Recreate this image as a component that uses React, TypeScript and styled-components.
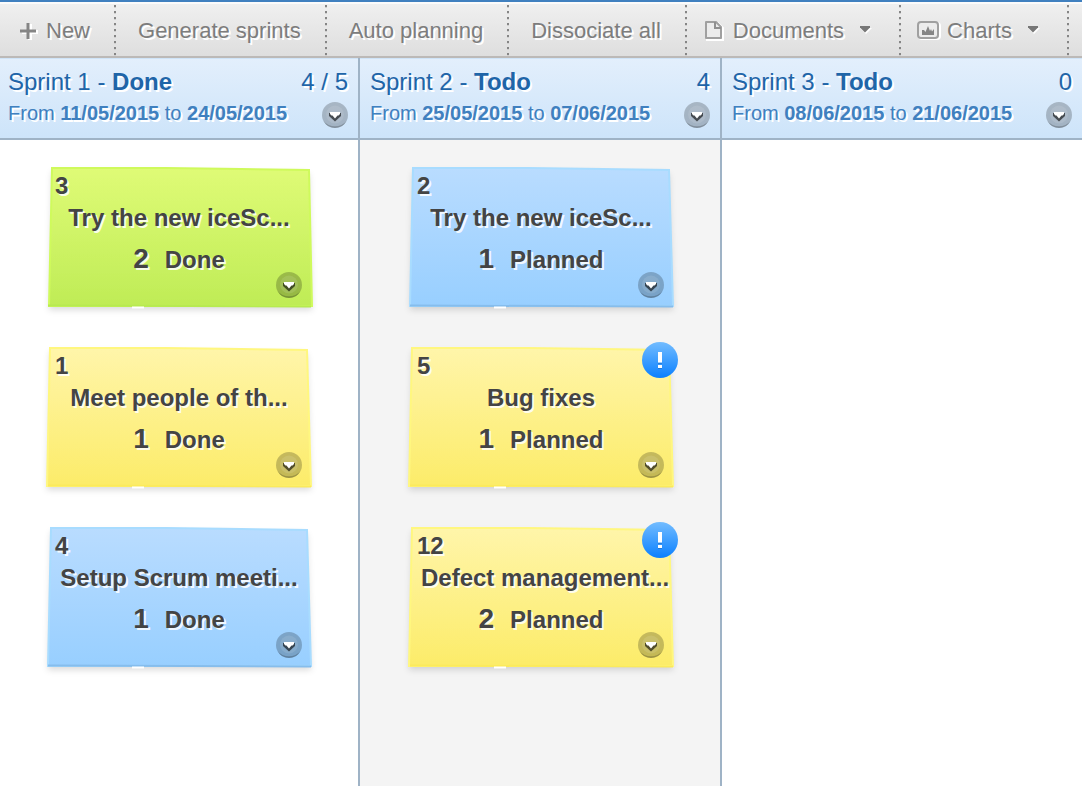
import React from "react";
import styled, { createGlobalStyle } from "styled-components";

const GlobalStyle = createGlobalStyle`
  * { box-sizing: border-box; }
  body {
    margin: 0;
    background: #fff;
    font-family: "Liberation Sans", Arial, Helvetica, sans-serif;
  }
  button { font: inherit; border: 0; background: none; padding: 0; margin: 0; cursor: pointer; }
  h2, h3, p { margin: 0; font-weight: normal; }
`;

const Page = styled.div`
  display: flex;
  flex-direction: column;
  min-height: 100vh;
  overflow: hidden;
`;

const Toolbar = styled.nav`
  display: flex;
  height: 58px;
  padding-top: 3px;
  border-top: 2px solid #4080bf;
  border-bottom: 2px solid #bcb9b7;
  background: linear-gradient(#f0f0f0, #dedede);
  box-shadow: inset 0 2px 0 #fbfbfb;
`;

const ToolItem = styled.div<{ $tight?: boolean }>`
  display: flex;
  flex: none;
  padding: ${(p) => (p.$tight ? "0 26px 0 16px" : "0 26px 0 22px")};
  background: repeating-linear-gradient(#858585 0 2px, #d0d0d0 2px 3px, transparent 3px 6px) right 0 top 0 / 2px 100% no-repeat;
`;

const ToolButton = styled.button`
  display: flex;
  align-items: center;
  padding-top: 1px;
  color: #7d7d7d;
  font-size: 22px;
  line-height: 26px;
  white-space: nowrap;
  text-shadow: 2px 2px 0 #fff;
`;

const ToolIcon = styled.svg`
  flex: none;
  margin-right: 6px;
  overflow: visible;
`;

const Caret = styled.svg`
  flex: none;
  margin: 0 4px 4px 15px;
  overflow: visible;
`;

const Board = styled.main`
  display: flex;
  flex: 1;
  margin: 0 -2px;
`;

const Column = styled.section<{ $shaded?: boolean }>`
  display: flex;
  flex: 1 1 0;
  min-width: 0;
  flex-direction: column;
  border-right: 2px solid #9fb3c6;
  background: ${(p) => (p.$shaded ? "#f4f4f4" : "#fff")};
`;

const ColumnHeader = styled.header`
  height: 82px;
  padding: 10px 10px 0;
  border-bottom: 2px solid #9fb3c6;
  background: linear-gradient(#e3effc, #cde4fa);
  box-shadow: inset 0 1px 0 #cfe4f8;
  text-shadow: 2px 2px 0 #fff;
  white-space: nowrap;
`;

const HeaderRow = styled.div`
  display: flex;
  justify-content: space-between;
`;

const SprintTitle = styled.h2`
  color: #1f65a8;
  font-size: 24px;
  line-height: 28px;
`;

const Points = styled.span`
  color: #1f65a8;
  font-size: 24px;
  line-height: 28px;
`;

const Dates = styled.p`
  padding-top: 5px;
  color: #4080bf;
  font-size: 20px;
  line-height: 24px;
`;

const HeaderMenu = styled.div`
  padding-top: 6px;
`;

const CardList = styled.div`
  display: flex;
  flex-direction: column;
  align-items: center;
  gap: 40px;
  padding: 27px 0 27px 2px;
`;

const CardBox = styled.article`
  position: relative;
  width: 266px;
  height: 140px;
  padding: 5px 9px 0;
  color: #444;
  font-weight: bold;
  font-size: 24px;
  line-height: 28px;
  white-space: nowrap;
  text-shadow: 2px 2px 0 rgba(255, 255, 255, 0.85);
`;

const Paper = styled.svg`
  position: absolute;
  inset: 0;
  overflow: visible;
`;

const CardId = styled.p`
  position: relative;
  font-weight: bold;
`;

const CardTitle = styled.h3`
  position: relative;
  display: flex;
  justify-content: safe center;
  margin: 4px 4px 0;
  font-size: 24px;
  font-weight: bold;
`;

const CardState = styled.p`
  position: relative;
  display: flex;
  justify-content: center;
  align-items: baseline;
  gap: 16px;
  padding-top: 13px;
  font-weight: bold;
`;

const Estimate = styled.span`
  font-size: 28px;
`;

const CardMenu = styled.div`
  position: absolute;
  right: 10px;
  bottom: 9px;
`;

const Badge = styled.span`
  position: absolute;
  top: -5px;
  right: -4px;
  width: 36px;
  height: 36px;
`;

const RoundButton = styled.button`
  display: block;
  width: 26px;
  height: 26px;
`;

type Tone = "green" | "yellow" | "blue";

const papers: Record<Tone, { top: string; bottom: string; edge: string; base: string; points: string }> = {
  green: { top: "#dffb76", bottom: "#bfec56", edge: "#cffa5c", base: "#b7ea50", points: "6,1 120,1 195,2 263,3 266,139 3,139" },
  yellow: { top: "#fff5aa", bottom: "#fcec69", edge: "#fff77f", base: "#fbea5c", points: "4,1 120,1 195,2 261,3 265,139 1,139" },
  blue: { top: "#b9dcff", bottom: "#98cfff", edge: "#a8dcff", base: "#86bdec", points: "5,1 120,1 195,2 261,3 265,139 2,139" },
};

function MenuButton({ label }: { label: string }) {
  return (
    <RoundButton type="button" aria-label={label}>
      <svg width="26" height="26" viewBox="0 0 26 26">
        <circle cx="13" cy="13" r="13" fill="#000" fillOpacity=".22" />
        <path d="M1.500 19a13 13 0 0 0 23 0a15 15 0 0 1-23 0z" fill="#000" fillOpacity=".2" />
        <circle cx="13" cy="12.500" r="9" fill="#fff" fillOpacity=".1" />
        <path d="M7 11v3l6 5.500 6-5.500v-3z" fill="#000" fillOpacity=".6" />
        <path d="M8 10h10v2l-1.500 1.500h-1L13 16.500 10.500 13.500h-1L8 12z" fill="#fff" />
      </svg>
    </RoundButton>
  );
}

interface Story {
  id: number;
  title: string;
  points: number;
  state: string;
  tone: Tone;
  alert?: boolean;
}

function Card({ id, title, points, state, tone, alert }: Story) {
  const paper = papers[tone];
  const fill = `paper-${id}`;
  return (
    <CardBox>
      <Paper width="266" height="140" viewBox="0 0 266 140" aria-hidden="true">
        <defs>
          <linearGradient id={fill} x1="0" y1="0" x2="0" y2="1">
            <stop offset="0" stopColor={paper.top} />
            <stop offset="1" stopColor={paper.bottom} />
          </linearGradient>
          <filter id={`shade-${id}`} x="-5%" y="-5%" width="110%" height="120%">
            <feDropShadow dx="0" dy="4" stdDeviation="3" floodColor="#000" floodOpacity=".14" />
          </filter>
        </defs>
        <polygon points={paper.points} fill={`url(#${fill})`} filter={`url(#shade-${id})`} />
        <polygon points={paper.points} fill="none" stroke={paper.edge} strokeWidth="2" />
        <path d="M2 138.500L265 139.500" stroke={paper.base} strokeWidth="2" />
        <path d="M86 140.500h12" stroke="#fff" strokeWidth="2" />
      </Paper>
      <CardId>{id}</CardId>
      <CardTitle>{title}</CardTitle>
      <CardState>
        <Estimate>{points}</Estimate>
        <span>{state}</span>
      </CardState>
      <CardMenu>
        <MenuButton label={`Story ${id} menu`} />
      </CardMenu>
      {alert && (
        <Badge>
          <svg width="36" height="36" viewBox="0 0 36 36" aria-hidden="true">
            <defs>
              <linearGradient id={`badge-${id}`} x1="0" y1="0" x2="0" y2="1">
                <stop offset="0" stopColor="#72bcff" />
                <stop offset="1" stopColor="#0a80ff" />
              </linearGradient>
            </defs>
            <circle cx="18" cy="18" r="18" fill={`url(#badge-${id})`} />
            <path d="M16 21h4v1h-4zM16 26h4v1h-4z" fill="#1a5fae" fillOpacity=".5" />
            <path d="M16 10h4v10.500h-4zM16 23h4v3h-4z" fill="#fff" />
          </svg>
        </Badge>
      )}
    </CardBox>
  );
}

interface Sprint {
  name: string;
  state: string;
  from: string;
  to: string;
  points: string;
  stories: Story[];
}

const sprints: Sprint[] = [
  {
    name: "Sprint 1", state: "Done", from: "11/05/2015", to: "24/05/2015", points: "4 / 5",
    stories: [
      { id: 3, title: "Try the new iceSc...", points: 2, state: "Done", tone: "green" },
      { id: 1, title: "Meet people of th...", points: 1, state: "Done", tone: "yellow" },
      { id: 4, title: "Setup Scrum meeti...", points: 1, state: "Done", tone: "blue" },
    ],
  },
  {
    name: "Sprint 2", state: "Todo", from: "25/05/2015", to: "07/06/2015", points: "4",
    stories: [
      { id: 2, title: "Try the new iceSc...", points: 1, state: "Planned", tone: "blue" },
      { id: 5, title: "Bug fixes", points: 1, state: "Planned", tone: "yellow", alert: true },
      { id: 12, title: "Defect management...", points: 2, state: "Planned", tone: "yellow", alert: true },
    ],
  },
  { name: "Sprint 3", state: "Todo", from: "08/06/2015", to: "21/06/2015", points: "0", stories: [] },
];

const DownCaret = () => (
  <Caret width="12" height="8" viewBox="0 0 12 8" aria-hidden="true">
    <path d="M1 3h12L7 9z" fill="#fff" />
    <path d="M1 1h10v1.500L6 7.500 1 2.500z" fill="#777" />
  </Caret>
);

export default function App() {
  return (
    <Page>
      <GlobalStyle />
      <Toolbar>
        <ToolItem $tight>
          <ToolButton type="button">
            <ToolIcon width="24" height="20" viewBox="0 0 24 20" aria-hidden="true">
              <path d="M12 3h4v6h6v4h-6v6h-4v-6H6V9h6z" fill="#fff" />
              <path d="M10.500 2h3v6.500h6.500v3h-6.500v6.500h-3v-6.500H4v-3h6.500z" fill="#858585" />
            </ToolIcon>
            New
          </ToolButton>
        </ToolItem>
        <ToolItem><ToolButton type="button">Generate sprints</ToolButton></ToolItem>
        <ToolItem><ToolButton type="button">Auto planning</ToolButton></ToolItem>
        <ToolItem><ToolButton type="button">Dissociate all</ToolButton></ToolItem>
        <ToolItem $tight>
          <ToolButton type="button">
            <ToolIcon width="24" height="20" viewBox="0 0 24 20" aria-hidden="true">
              <path d="M4 2h11l5 5v12H4z" fill="none" stroke="#fff" strokeWidth="2" />
              <path d="M3 1h10l5 5v11H3z" fill="#ececec" stroke="#a0a0a0" strokeWidth="2" strokeLinejoin="round" />
              <path d="M12 1v6h6" fill="none" stroke="#909090" strokeWidth="2" />
            </ToolIcon>
            Documents
            <DownCaret />
          </ToolButton>
        </ToolItem>
        <ToolItem $tight>
          <ToolButton type="button">
            <ToolIcon width="24" height="20" viewBox="0 0 24 20" aria-hidden="true">
              <rect x="2" y="2" width="21" height="16" rx="3" fill="none" stroke="#fff" strokeWidth="2" />
              <rect x="1" y="1" width="20" height="16" rx="3" fill="#ececec" stroke="#a0a0a0" strokeWidth="2" />
              <path d="M5 14V9l2 0 1.500 2L11 5l2 5 1-2 1 2.500 2-2.500V14z" fill="#858585" />
            </ToolIcon>
            Charts
            <DownCaret />
          </ToolButton>
        </ToolItem>
      </Toolbar>
      <Board>
        {sprints.map((s, i) => (
          <Column key={s.name} $shaded={i === 1}>
            <ColumnHeader>
              <HeaderRow>
                <SprintTitle>{s.name} - <b>{s.state}</b></SprintTitle>
                <Points>{s.points}</Points>
              </HeaderRow>
              <HeaderRow>
                <Dates>From <b>{s.from}</b> to <b>{s.to}</b></Dates>
                <HeaderMenu><MenuButton label={`${s.name} menu`} /></HeaderMenu>
              </HeaderRow>
            </ColumnHeader>
            <CardList>
              {s.stories.map((story) => <Card key={story.id} {...story} />)}
            </CardList>
          </Column>
        ))}
      </Board>
    </Page>
  );
}
